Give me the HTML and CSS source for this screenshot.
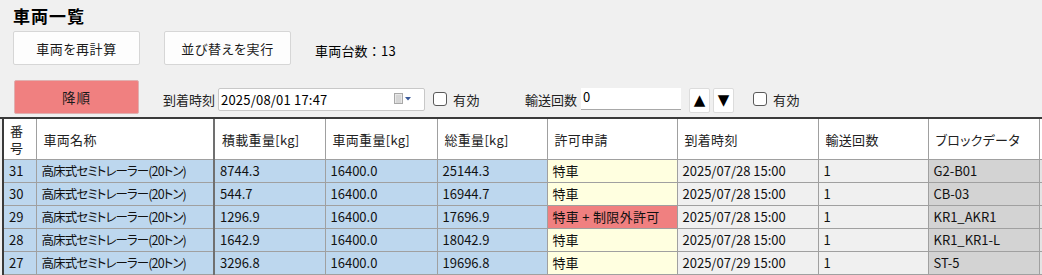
FILE: index.html
```html
<!DOCTYPE html>
<html lang="ja">
<head>
<meta charset="utf-8">
<link rel="stylesheet" href="styles.css">
</head>
<body>
<div class="page">
  <h1 class="title">車両一覧</h1>
  <div class="toolbar">
    <button class="btn">車両を再計算</button>
    <button class="btn">並び替えを実行</button>
    <span class="count">車両台数：13</span>
  </div>
  <div class="filters">
    <button class="btn btn-red">降順</button>
    <span class="label">到着時刻</span>
    <div class="date-input">
      <span class="date-text">2025/08/01 17:47</span>
      <svg class="cal" width="18" height="12" viewBox="0 0 18 12">
        <rect x="0.5" y="0.5" width="8" height="10" fill="#e8e8e8" stroke="#a8a8a8"/>
        <path d="M2 3h5M2 5h5M2 7h5M2 9h5" stroke="#c4c4c4" stroke-width="1"/>
        <path d="M11 4h6l-3 3.5z" fill="#3a5a9a"/>
      </svg>
    </div>
    <label class="check"><span class="box"></span>有効</label>
    <span class="label label-count">輸送回数</span>
    <div class="num-input">0</div>
    <div class="spin">
      <button class="arrow">▲</button>
      <button class="arrow">▼</button>
    </div>
    <label class="check check2"><span class="box"></span>有効</label>
  </div>
  <div class="grid-wrap">
    <table class="grid">
      <colgroup>
        <col class="c-no"><col class="c-name"><col class="c-w"><col class="c-w2"><col class="c-w3"><col class="c-permit"><col class="c-time"><col class="c-trips"><col class="c-block"><col class="c-extra">
      </colgroup>
      <thead>
        <tr>
          <th class="no-h">番<br>号</th>
          <th class="frozen">車両名称</th>
          <th>積載重量[kg]</th>
          <th>車両重量[kg]</th>
          <th>総重量[kg]</th>
          <th>許可申請</th>
          <th>到着時刻</th>
          <th>輸送回数</th>
          <th>ブロックデータ</th>
          <th></th>
        </tr>
      </thead>
      <tbody>
        <tr>
          <td class="b">31</td><td class="b frozen name">高床式セミトレーラー(20トン)</td><td class="b">8744.3</td><td class="b">16400.0</td><td class="b">25144.3</td><td class="y">特車</td><td>2025/07/28 15:00</td><td>1</td><td class="g">G2-B01</td><td class="g2"></td>
        </tr>
        <tr>
          <td class="b">30</td><td class="b frozen name">高床式セミトレーラー(20トン)</td><td class="b">544.7</td><td class="b">16400.0</td><td class="b">16944.7</td><td class="y">特車</td><td>2025/07/28 15:00</td><td>1</td><td class="g">CB-03</td><td class="g2"></td>
        </tr>
        <tr>
          <td class="b">29</td><td class="b frozen name">高床式セミトレーラー(20トン)</td><td class="b">1296.9</td><td class="b">16400.0</td><td class="b">17696.9</td><td class="r permit">特車 + 制限外許可</td><td>2025/07/28 15:00</td><td>1</td><td class="g">KR1_AKR1</td><td class="g2"></td>
        </tr>
        <tr>
          <td class="b">28</td><td class="b frozen name">高床式セミトレーラー(20トン)</td><td class="b">1642.9</td><td class="b">16400.0</td><td class="b">18042.9</td><td class="y">特車</td><td>2025/07/28 15:00</td><td>1</td><td class="g">KR1_KR1-L</td><td class="g2"></td>
        </tr>
        <tr>
          <td class="b">27</td><td class="b frozen name">高床式セミトレーラー(20トン)</td><td class="b">3296.8</td><td class="b">16400.0</td><td class="b">19696.8</td><td class="y">特車</td><td>2025/07/29 15:00</td><td>1</td><td class="g">ST-5</td><td class="g2"></td>
        </tr>
        <tr>
          <td class="b"></td><td class="b frozen"></td><td class="b"></td><td class="b"></td><td class="b"></td><td class="y"></td><td></td><td></td><td class="g"></td><td class="g2"></td>
        </tr>
      </tbody>
    </table>
  </div>
</div>
</body>
</html>
```

FILE: styles.css
```css
html, body {
  margin: 0;
  padding: 0;
  background: #f0f0f0;
  overflow: hidden;
}

body {
  font-family: "Noto Sans CJK JP", "Noto Sans", sans-serif;
  font-size: 13px;
  color: #000;
  font-feature-settings: "palt";
}

.page {
  width: 1042px;
  height: 275px;
  overflow: hidden;
}

.title {
  margin: 0;
  padding: 5px 0 0 13px;
  height: 26px;
  box-sizing: border-box;
  font-size: 17px;
  font-weight: bold;
  line-height: 22px;
  letter-spacing: 1px;
}

.toolbar {
  display: flex;
  align-items: center;
  padding-left: 13px;
  margin-top: 5px;
  height: 34px;
}

.btn {
  font-family: inherit;
  font-size: 13px;
  font-feature-settings: "palt";
  width: 127px;
  height: 34px;
  background: #fdfdfd;
  border: 1px solid #d6d6d6;
  border-radius: 2px;
  color: #1a1a1a;
  letter-spacing: 0.6px;
  padding: 0;
}

.toolbar .btn + .btn {
  margin-left: 24px;
}

.count {
  margin-left: 24px;
  margin-top: 4px;
  font-feature-settings: normal;
  letter-spacing: 0.2px;
}

.filters {
  display: flex;
  align-items: center;
  padding-left: 14px;
  margin-top: 15px;
  height: 34px;
}

.btn-red {
  width: 125px;
  background: #f08080;
  border-color: #e0b0b0;
  font-size: 13.5px;
  letter-spacing: 1px;
}

.label {
  margin-left: 24px;
  margin-top: 4px;
  color: #222;
}

.date-input {
  margin-left: 3px;
  margin-top: 4px;
  width: 207px;
  height: 23px;
  box-sizing: border-box;
  background: #fff;
  border: 1px solid #c8c8c8;
  border-radius: 2px;
  display: flex;
  align-items: center;
  padding-left: 2px;
  padding-right: 12px;
}

.date-text {
  flex: 1;
  letter-spacing: 0.2px;
}

.cal {
  display: block;
}

.check {
  display: flex;
  align-items: center;
  margin-left: 8px;
  margin-top: 4px;
  color: #222;
  letter-spacing: 0.5px;
}

.box {
  width: 12px;
  height: 12px;
  border: 1px solid #5a5a5a;
  border-radius: 3px;
  background: #fff;
  margin-right: 6px;
}

.label-count {
  margin-left: 45px;
}

.num-input {
  margin-left: 4px;
  margin-top: 3px;
  width: 100px;
  height: 22px;
  box-sizing: border-box;
  background: #fff;
  border-bottom: 1px solid #a8a8a8;
  padding-left: 2px;
  line-height: 18px;
}

.spin {
  display: flex;
  margin-left: 8px;
  margin-top: 6px;
  gap: 3px;
}

.arrow {
  width: 21px;
  height: 25px;
  padding: 0;
  background: #fff;
  border: 1px solid #dcdcdc;
  border-radius: 2px;
  font-size: 15px;
  line-height: 1;
  color: #000;
  font-family: "DejaVu Sans", sans-serif;
}

.check2 {
  margin-left: 19px;
}

.grid-wrap {
  margin-top: 3px;
  border-top: 2px solid #3a3a3a;
  padding-left: 2px;
}

.grid {
  border-collapse: collapse;
  table-layout: fixed;
  width: 1100px;
  border-left: 2px solid #3a3a3a;
}

.c-no { width: 33px; }
.c-name { width: 178px; }
.c-w { width: 111px; }
.c-w2 { width: 112px; }
.c-w3 { width: 110px; }
.c-permit { width: 130px; }
.c-time { width: 141px; }
.c-trips { width: 110px; }
.c-block { width: 111px; }
.c-extra { width: 64px; }

.grid th,
.grid td {
  border: 1px solid #a0a0a0;
  text-align: left;
  white-space: nowrap;
  overflow: hidden;
  padding: 0 0 0 5px;
}

.grid th {
  background: #fff;
  font-weight: normal;
  height: 40px;
  padding-left: 7px;
  color: #222;
  letter-spacing: 0.3px;
  border-top: none;
}

.grid th.no-h {
  padding-left: 6px;
  line-height: 17px;
}

.grid td {
  height: 22px;
  line-height: 22px;
  color: #111;
}

.grid td.name {
  font-size: 12.5px;
  letter-spacing: -0.9px;
}

.grid td.permit {
  font-feature-settings: normal;
  letter-spacing: 0.3px;
}

.grid .frozen {
  border-right: 2px solid #707070;
}

.b { background: #bdd7ee; }
.y { background: #ffffe0; }
.r { background: #f08080; }
.g { background: #d3d3d3; }
.g2 { background: #e4e4e4; }
```
